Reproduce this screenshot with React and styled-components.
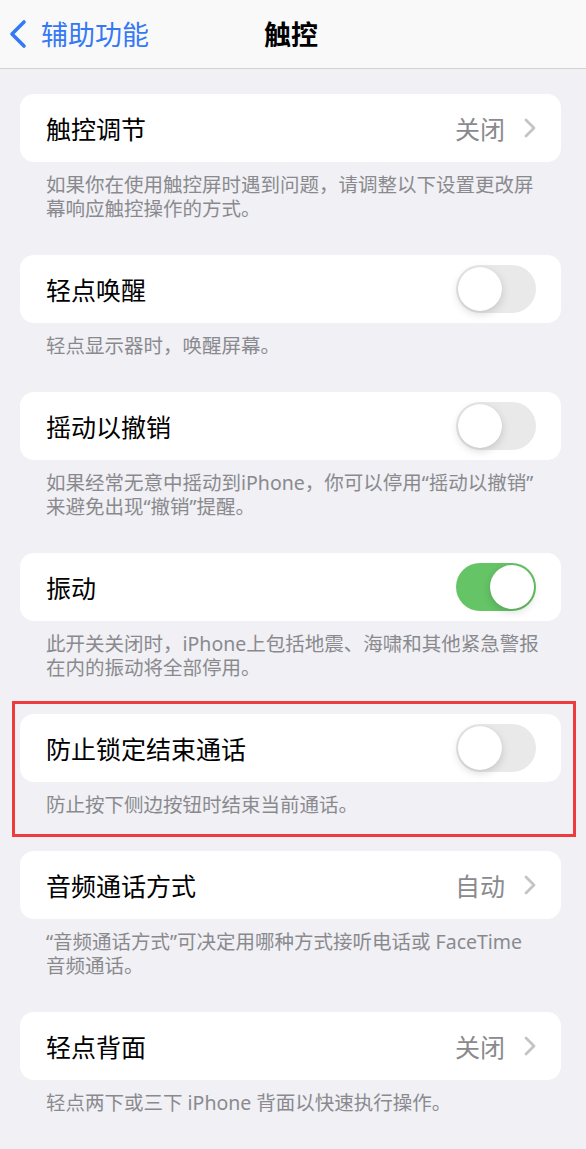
import styled, { createGlobalStyle } from "styled-components"

const GlobalStyle = createGlobalStyle`
  body {
    margin: 0;
    background: #f0f0f5;
    font-family: "Noto Sans", "Noto Sans CJK SC", sans-serif;
  }
`

const Page = styled.div`
  width: 586px;
  min-height: 1149px;
  background: #f0f0f5;
`

const NavBar = styled.header`
  height: 68px;
  display: grid;
  grid-template-columns: 1fr auto 1fr;
  align-items: center;
  background: #f9f9f9;
  border-bottom: 1px solid #d2d2d6;
`

const BackButton = styled.div`
  display: flex;
  align-items: center;
  gap: 14px;
  padding-left: 9px;
  color: #3478f6;
  font-size: 27px;
  line-height: 1;
`

const NavTitle = styled.div`
  font-size: 27px;
  font-weight: 600;
  color: #000;
  line-height: 1;
  margin-left: -4px;
`

const Content = styled.main`
  padding: 25px 25px 20px 20px;
`

const Section = styled.section`
  position: relative;
  margin-bottom: 34px;
`

const Highlight = styled.div`
  position: absolute;
  top: -13px;
  left: -8px;
  right: -15px;
  bottom: -20px;
  border: 3px solid #ee3b3d;
  pointer-events: none;
`

const Card = styled.div`
  height: 68px;
  background: #fff;
  border-radius: 14px;
  display: flex;
  align-items: center;
  justify-content: space-between;
  padding: 0 25px 0 26px;
`

const Label = styled.span`
  font-size: 25px;
  color: #000;
`

const Detail = styled.div`
  display: flex;
  align-items: center;
  gap: 19px;
  font-size: 25px;
  color: #8a8a8e;
`

const Footer = styled.p`
  margin: 0;
  padding: 11px 0 0 26px;
  font-size: 19.5px;
  line-height: 24px;
  color: #8a8a8e;
  white-space: nowrap;
`

const Track = styled.div`
  width: 80px;
  height: 48px;
  border-radius: 24px;
  background: ${(p) => (p.$on ? "#65c466" : "#e9e9ea")};
  display: flex;
  align-items: center;
  justify-content: ${(p) => (p.$on ? "flex-end" : "flex-start")};
  padding: 2px;
  box-sizing: border-box;
`

const Knob = styled.div`
  width: 44px;
  height: 44px;
  border-radius: 50%;
  background: #fff;
  box-shadow: 0 3px 8px rgba(0, 0, 0, 0.15), 0 0 1px rgba(0, 0, 0, 0.12);
`

function Toggle({ on }) {
  return (
    <Track $on={on}>
      <Knob />
    </Track>
  )
}

function Chevron() {
  return (
    <svg width="12" height="20" viewBox="0 0 12 20">
      <path d="M2 2 L10 10 L2 18" fill="none" stroke="#c4c4c7" strokeWidth="2.8" strokeLinecap="round" strokeLinejoin="round" />
    </svg>
  )
}

function Row({ label, value, toggle, on }) {
  return (
    <Card>
      <Label>{label}</Label>
      {toggle ? (
        <Toggle on={on} />
      ) : (
        <Detail>
          {value}
          <Chevron />
        </Detail>
      )}
    </Card>
  )
}

export default function App() {
  return (
    <Page>
      <GlobalStyle />
      <NavBar>
        <BackButton>
          <svg width="18" height="30" viewBox="0 0 18 30">
            <path d="M15 3 L3 15 L15 27" fill="none" stroke="#3478f6" strokeWidth="3.6" strokeLinecap="round" strokeLinejoin="round" />
          </svg>
          辅助功能
        </BackButton>
        <NavTitle>触控</NavTitle>
        <div />
      </NavBar>
      <Content>
        <Section>
          <Row label="触控调节" value="关闭" />
          <Footer>
            如果你在使用触控屏时遇到问题，请调整以下设置更改屏
            <br />
            幕响应触控操作的方式。
          </Footer>
        </Section>
        <Section>
          <Row label="轻点唤醒" toggle />
          <Footer>轻点显示器时，唤醒屏幕。</Footer>
        </Section>
        <Section>
          <Row label="摇动以撤销" toggle />
          <Footer>
            如果经常无意中摇动到iPhone，你可以停用“摇动以撤销”
            <br />
            来避免出现“撤销”提醒。
          </Footer>
        </Section>
        <Section>
          <Row label="振动" toggle on />
          <Footer>
            此开关关闭时，iPhone上包括地震、海啸和其他紧急警报
            <br />
            在内的振动将全部停用。
          </Footer>
        </Section>
        <Section>
          <Highlight />
          <Row label="防止锁定结束通话" toggle />
          <Footer>防止按下侧边按钮时结束当前通话。</Footer>
        </Section>
        <Section>
          <Row label="音频通话方式" value="自动" />
          <Footer>
            “音频通话方式”可决定用哪种方式接听电话或 FaceTime
            <br />
            音频通话。
          </Footer>
        </Section>
        <Section>
          <Row label="轻点背面" value="关闭" />
          <Footer>轻点两下或三下 iPhone 背面以快速执行操作。</Footer>
        </Section>
      </Content>
    </Page>
  )
}
